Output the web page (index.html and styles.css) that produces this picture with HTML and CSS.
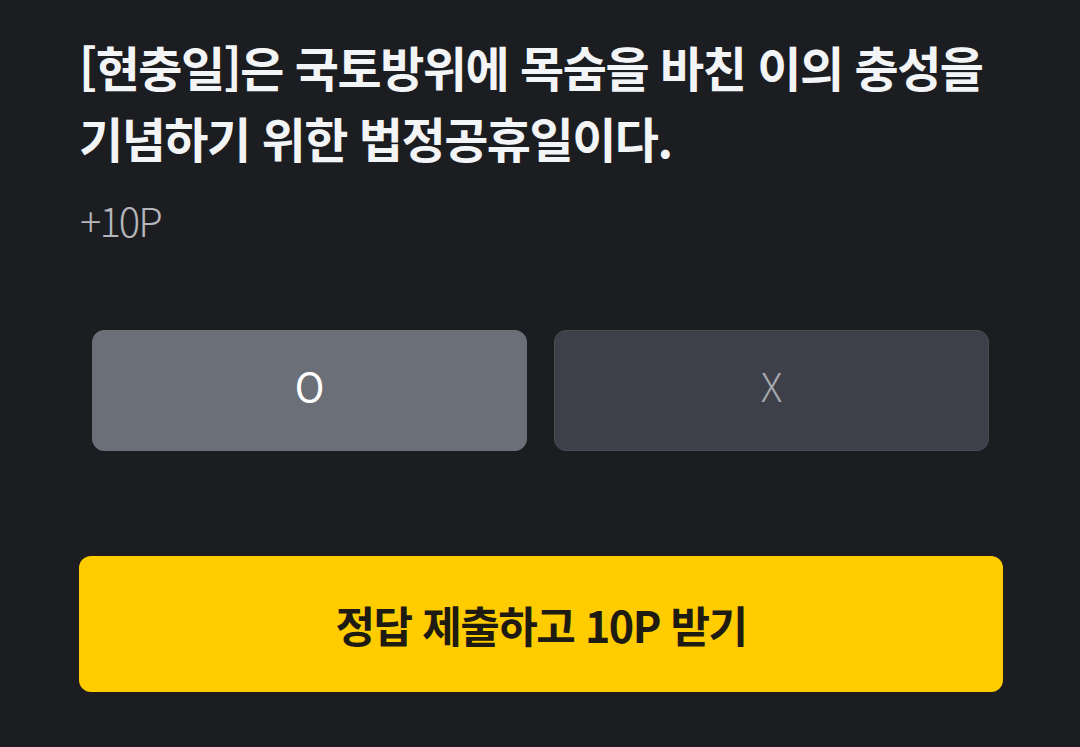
FILE: index.html
```html
<!DOCTYPE html>
<html lang="ko">
<head>
  <meta charset="UTF-8">
  <meta name="viewport" content="width=device-width, initial-scale=1.0">
  <title>퀴즈</title>
  <link rel="stylesheet" href="styles.css">
</head>
<body>
  <div class="quiz">
    <h1 class="question">[현충일]은 국토방위에 목숨을 바친 이의 충성을<br>기념하기 위한 법정공휴일이다.</h1>
    <p class="point">+10P</p>

    <div class="choices">
      <button class="choice choice-on">O</button>
      <button class="choice">X</button>
    </div>

    <button class="submit">정답 제출하고 10P 받기</button>
  </div>
</body>
</html>
```

FILE: styles.css
```css
body {
  margin: 0;
  padding: 0;
  background-color: #1c1d21;
  color: #f3f4f6;
  font-family: 'Noto Sans CJK KR', 'Noto Sans', sans-serif;
  height: 747px;
  overflow: hidden;
}

.quiz {
  width: 924px;
  padding: 31px 0 0 79px;
  display: flex;
  flex-direction: column;
}

.question {
  margin: 0;
  font-size: 48px;
  font-weight: 700;
  line-height: 71px;
  letter-spacing: -1.5px;
  color: #f3f4f6;
}

.point {
  margin: 22px 0 0 1px;
  font-size: 40px;
  font-weight: 300;
  line-height: 50px;
  letter-spacing: -2px;
  color: #b4b6bb;
}

.choices {
  display: flex;
  gap: 27px;
  margin: 85px 14px 0 13px;
}

.choice {
  flex: 1;
  height: 121px;
  padding: 0 0 12px;
  border-radius: 12px;
  border: 1px solid #484b53;
  background-color: #3d4048;
  color: #a5a8ae;
  font-family: 'Noto Sans CJK KR', 'Noto Sans', sans-serif;
  font-size: 40px;
  font-weight: 300;
}

.choice-on {
  border-color: #6b6f78;
  background-color: #6b6f78;
  color: #ffffff;
  font-weight: 400;
}

.submit {
  margin-top: 105px;
  height: 136px;
  border: none;
  border-radius: 12px;
  background-color: #ffcc00;
  color: #1e1b12;
  font-family: 'Noto Sans CJK KR', 'Noto Sans', sans-serif;
  font-size: 43px;
  font-weight: 700;
  letter-spacing: -1.5px;
}
```
